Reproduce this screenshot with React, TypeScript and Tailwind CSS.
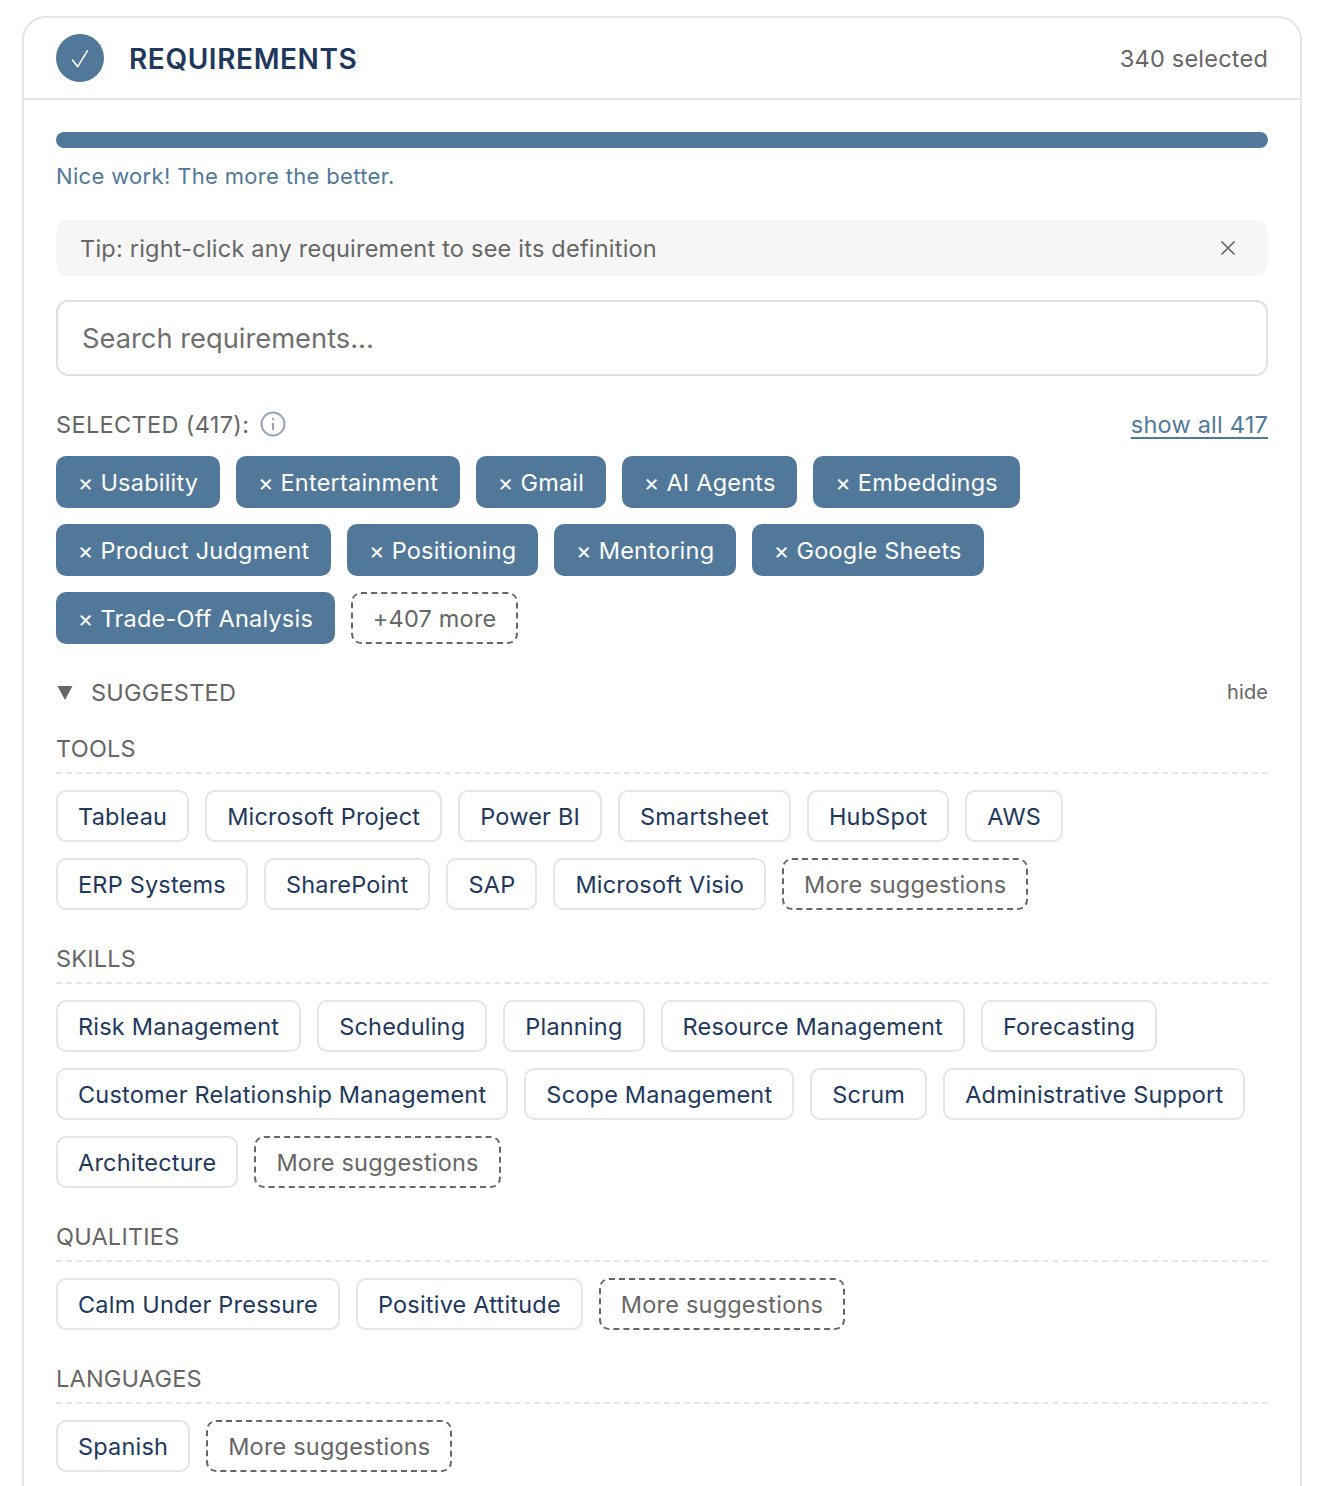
import React from "react";

const font = { fontFamily: "Inter, 'Noto Sans', sans-serif" };

function Selected({ label }: { label: string }) {
  return (
    <span className="inline-flex h-[52px] items-center rounded-[10px] bg-[#527899] px-[21.8px] pt-[2px] text-[23.5px] tracking-[0.22px] text-white whitespace-nowrap">
      × {label}
    </span>
  );
}

function Chip({ label }: { label: string }) {
  return (
    <span className="inline-flex h-[52px] items-center rounded-[10px] border-2 border-[#e5e5e5] bg-white px-[20px] pt-[2px] text-[23.5px] tracking-[0.2px] text-[#22375c] whitespace-nowrap">
      {label}
    </span>
  );
}

function More({ label }: { label: string }) {
  return (
    <span className="inline-flex h-[52px] items-center rounded-[10px] border-2 border-dashed border-[#666666] bg-white px-[20px] pt-[2px] text-[23.5px] tracking-[0.2px] text-[#666666] whitespace-nowrap">
      {label}
    </span>
  );
}

function Section({ title, items, className }: { title: string; items: string[]; className: string }) {
  return (
    <section className={className}>
      <div className="h-[37px] border-b-2 border-dashed border-[#e5e5e5] text-[23.5px] leading-[24px] tracking-[0.22px] text-[#666666]">
        {title}
      </div>
      <div className="mt-[16px] flex flex-wrap gap-[16px]">
        {items.map((i) => (
          <Chip key={i} label={i} />
        ))}
        <More label="More suggestions" />
      </div>
    </section>
  );
}

export default function App() {
  return (
    <div className="min-h-[1486px] overflow-hidden bg-white pl-[22px] pr-[18px] pt-[16px]" style={font}>
      <div className="h-[1500px] rounded-t-[24px] border-2 border-[#e5e5e5] bg-white">
        <header className="flex h-[82px] items-center justify-between border-b-2 border-[#e5e5e5] px-[32px]">
          <div className="flex items-center gap-[25px]">
            <span className="flex h-[48px] w-[48px] items-center justify-center rounded-full bg-[#527899]">
              <svg width="20" height="20" viewBox="0 0 20 20" fill="none" stroke="white" strokeWidth="1.5" strokeLinecap="round" strokeLinejoin="round">
                <path d="M2.5 12 L7.7 18.7 L17.3 3" />
              </svg>
            </span>
            <h1 className="pt-[1px] text-[28px] font-semibold tracking-[0.6px] text-[#22375c]">REQUIREMENTS</h1>
          </div>
          <span className="pt-[2px] text-[23.5px] tracking-[0.22px] text-[#666666]">340 selected</span>
        </header>

        <main className="px-[32px] pt-[32px]">
          <div className="h-[16px] rounded-full bg-[#527899]" />
          <p className="mt-[14px] text-[22px] leading-[28px] tracking-[0.33px] text-[#527899]">Nice work! The more the better.</p>

          <div className="mt-[30px] flex h-[56px] items-center justify-between rounded-[12px] bg-[#f6f6f6] pl-[24px] pr-[30px] text-[23.5px] tracking-[0.22px] text-[#666666]">
            <span className="pt-[2px]">Tip: right-click any requirement to see its definition</span>
            <svg width="20" height="20" viewBox="0 0 20 20" fill="none" stroke="#666666" strokeWidth="1.7">
              <path d="M3.5 3.5 L16.5 16.5 M16.5 3.5 L3.5 16.5" />
            </svg>
          </div>

          <div className="mt-[24px] flex h-[76px] items-center rounded-[12px] border-2 border-[#e0e0e0] px-[24px] pt-[2px] text-[27.3px] text-[#6f6f6f]">
            Search requirements...
          </div>

          <div className="mt-[30px] flex h-[36px] items-center justify-between text-[23.5px] tracking-[0.22px]">
            <div className="flex items-center gap-[11px] text-[#666666]">
              <span className="pt-[2px] tracking-[0.35px]">SELECTED (417):</span>
              <svg width="26" height="26" viewBox="0 0 26 26" fill="none" stroke="#9aa3b5" strokeWidth="2">
                <circle cx="13" cy="13" r="11.5" />
                <path d="M13 12 V19" />
                <path d="M13 7 V9" />
              </svg>
            </div>
            <span className="pt-[2px] text-[#527899] underline decoration-2 underline-offset-[4px]">show all 417</span>
          </div>

          <div className="mt-[14px] flex flex-wrap gap-[16px]">
            {["Usability", "Entertainment", "Gmail", "AI Agents", "Embeddings", "Product Judgment", "Positioning", "Mentoring", "Google Sheets", "Trade-Off Analysis"].map((s) => (
              <Selected key={s} label={s} />
            ))}
            <More label="+407 more" />
          </div>

          <div className="mt-[30px] flex h-[36px] items-center justify-between">
            <div className="flex items-center gap-[18px] text-[23.5px] tracking-[0.22px] text-[#666666]">
              <svg className="mt-[2px] ml-[1px]" width="16" height="16" viewBox="0 0 16 16" fill="#666666">
                <path d="M0.5 1 H15.5 L8 15 Z" />
              </svg>
              <span className="pt-[2px]">SUGGESTED</span>
            </div>
            <span className="text-[20px] tracking-[0.1px] text-[#666666]">hide</span>
          </div>

          <Section className="mt-[27px]" title="TOOLS" items={["Tableau", "Microsoft Project", "Power BI", "Smartsheet", "HubSpot", "AWS", "ERP Systems", "SharePoint", "SAP", "Microsoft Visio"]} />
          <Section className="mt-[37px]" title="SKILLS" items={["Risk Management", "Scheduling", "Planning", "Resource Management", "Forecasting", "Customer Relationship Management", "Scope Management", "Scrum", "Administrative Support", "Architecture"]} />
          <Section className="mt-[37px]" title="QUALITIES" items={["Calm Under Pressure", "Positive Attitude"]} />
          <Section className="mt-[37px]" title="LANGUAGES" items={["Spanish"]} />
        </main>
      </div>
    </div>
  );
}
